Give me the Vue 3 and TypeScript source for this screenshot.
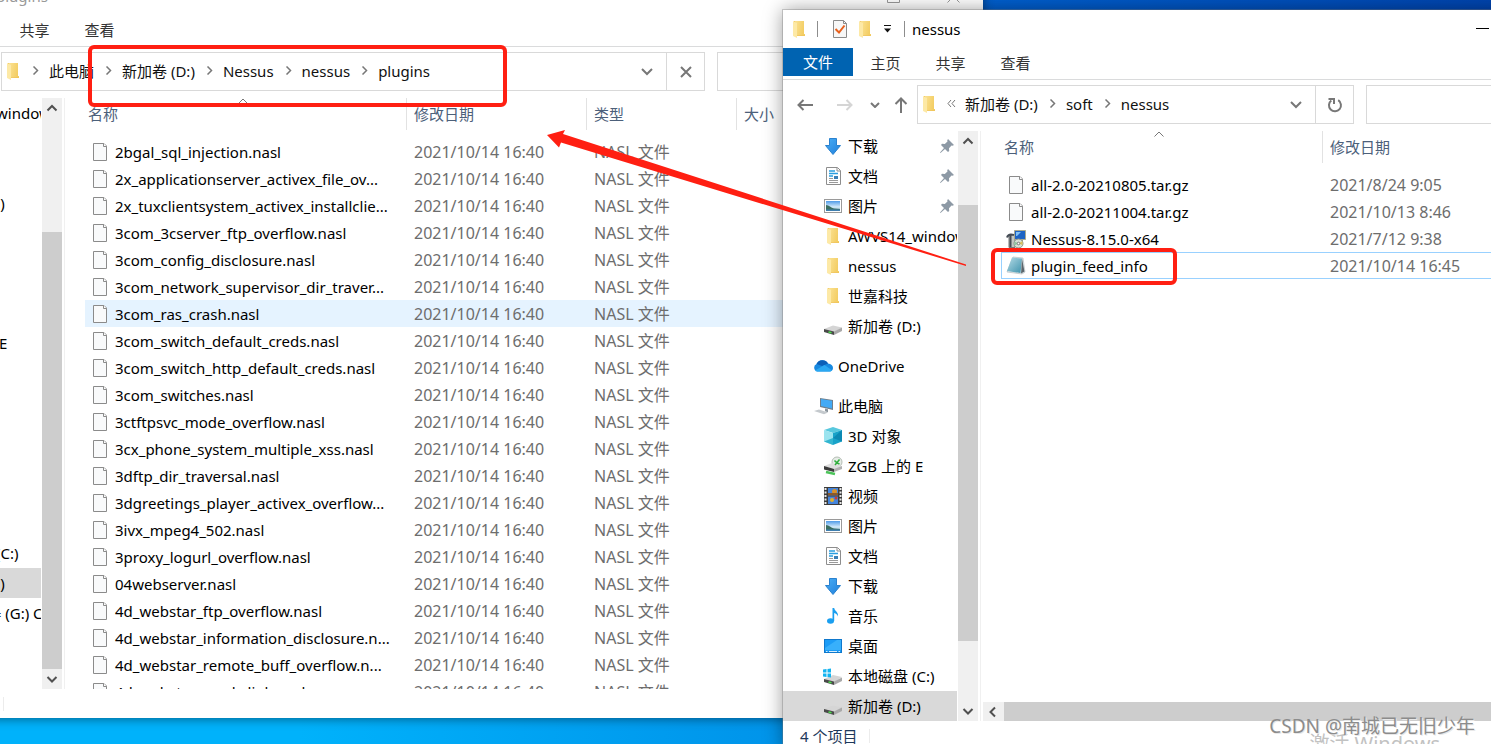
<script setup lang="ts">
interface NavItem {
  label?: string
  icon?: string
  level?: 1 | 2
  pinned?: boolean
  selected?: boolean
  gap?: boolean
}
interface FileRow {
  name: string
  icon: string
  date: string
  type?: string
  state?: 'hover' | 'focused'
}
interface ExplorerWindow {
  id: string
  title: string
  active: boolean
  crumbs: string[]
  collapsed: boolean
  loading: boolean
  thumb: { top: number; size: number }
  nav: NavItem[]
  columns: string[]
  files: FileRow[]
  status: string
  hscroll: boolean
}

const plugins = [
  '2bgal_sql_injection.nasl',
  '2x_applicationserver_activex_file_ov...',
  '2x_tuxclientsystem_activex_installclie...',
  '3com_3cserver_ftp_overflow.nasl',
  '3com_config_disclosure.nasl',
  '3com_network_supervisor_dir_traver...',
  '3com_ras_crash.nasl',
  '3com_switch_default_creds.nasl',
  '3com_switch_http_default_creds.nasl',
  '3com_switches.nasl',
  '3ctftpsvc_mode_overflow.nasl',
  '3cx_phone_system_multiple_xss.nasl',
  '3dftp_dir_traversal.nasl',
  '3dgreetings_player_activex_overflow...',
  '3ivx_mpeg4_502.nasl',
  '3proxy_logurl_overflow.nasl',
  '04webserver.nasl',
  '4d_webstar_ftp_overflow.nasl',
  '4d_webstar_information_disclosure.n...',
  '4d_webstar_remote_buff_overflow.n...',
  '4d_webstar_symb_link.nasl',
]

const windows: ExplorerWindow[] = [
  {
    id: 'rear',
    title: 'plugins',
    active: false,
    crumbs: ['此电脑', '新加卷 (D:)', 'Nessus', 'nessus', 'plugins'],
    collapsed: false,
    loading: true,
    thumb: { top: 20.8, size: 79.2 },
    nav: [
      { label: 'AWVS14_windows', icon: 'folder' },
      {},
      {},
      { label: '新加卷 (D:)', icon: 'drive' },
      { gap: true },
      {},
      { gap: true },
      {},
      {},
      { label: 'ZGB 上的 E', icon: 'netdrive' },
      {},
      {},
      {},
      {},
      {},
      {},
      { label: '本地磁盘 (C:)', icon: 'sysdrive' },
      { label: '新加卷 (D:)', icon: 'drive', selected: true },
      { label: 'CD 驱动器 (G:) CDROM', icon: 'drive' },
    ],
    columns: ['名称', '修改日期', '类型', '大小'],
    files: plugins.map((name, i) => ({
      name,
      icon: 'file',
      date: '2021/10/14 16:40',
      type: 'NASL 文件',
      state: i === 6 ? 'hover' : undefined,
    })),
    status: '',
    hscroll: false,
  },
  {
    id: 'front',
    title: 'nessus',
    active: true,
    crumbs: ['新加卷 (D:)', 'soft', 'nessus'],
    collapsed: true,
    loading: false,
    thumb: { top: 9.8, size: 79.3 },
    nav: [
      { label: '下载', icon: 'download', pinned: true },
      { label: '文档', icon: 'document', pinned: true },
      { label: '图片', icon: 'picture', pinned: true },
      { label: 'AWVS14_windows', icon: 'folder' },
      { label: 'nessus', icon: 'folder' },
      { label: '世嘉科技', icon: 'folder' },
      { label: '新加卷 (D:)', icon: 'drive' },
      { gap: true },
      { label: 'OneDrive', icon: 'cloud', level: 1 },
      { gap: true },
      { label: '此电脑', icon: 'computer', level: 1 },
      { label: '3D 对象', icon: 'cube' },
      { label: 'ZGB 上的 E', icon: 'netdrive' },
      { label: '视频', icon: 'video' },
      { label: '图片', icon: 'picture' },
      { label: '文档', icon: 'document' },
      { label: '下载', icon: 'download' },
      { label: '音乐', icon: 'music' },
      { label: '桌面', icon: 'desktop' },
      { label: '本地磁盘 (C:)', icon: 'sysdrive' },
      { label: '新加卷 (D:)', icon: 'drive', selected: true },
    ],
    columns: ['名称', '修改日期'],
    files: [
      { name: 'all-2.0-20210805.tar.gz', icon: 'file', date: '2021/8/24 9:05' },
      { name: 'all-2.0-20211004.tar.gz', icon: 'file', date: '2021/10/13 8:46' },
      { name: 'Nessus-8.15.0-x64', icon: 'installer', date: '2021/7/12 9:38' },
      { name: 'plugin_feed_info', icon: 'notepad', date: '2021/10/14 16:45', state: 'focused' },
    ],
    status: '4 个项目',
    hscroll: true,
  },
]
</script>

<template>
  <main class="desktop">
    <svg class="sprites" aria-hidden="true">
      <defs>
        <linearGradient id="gFolder" x1="0" x2="1" y1="0" y2="0.3">
          <stop offset="0" stop-color="#fbe293" /><stop offset="1" stop-color="#f3cd63" />
        </linearGradient>
        <linearGradient id="gBlue" x1="0" x2="1" y1="0" y2="1">
          <stop offset="0" stop-color="#4aaef5" /><stop offset="1" stop-color="#1f7fdc" />
        </linearGradient>
        <linearGradient id="gSky" x1="0" x2="0" y1="0" y2="1">
          <stop offset="0" stop-color="#4f9be8" /><stop offset="0.6" stop-color="#d5ebfa" />
          <stop offset="1" stop-color="#6fa0b8" />
        </linearGradient>
        <linearGradient id="gNote" x1="0" x2="1" y1="0" y2="1">
          <stop offset="0" stop-color="#b5dbe6" /><stop offset="1" stop-color="#3f93ad" />
        </linearGradient>
      </defs>
      <symbol id="i-folder" viewBox="0 0 20 20">
        <path d="M5 2h10v13l1 1v1H7z" fill="#eebf55" />
        <path d="M6 2h9v13h1v1.500H8z" fill="url(#gFolder)" />
        <path d="M4 2l4 2v15l-4-2z" fill="#fde9a6" />
      </symbol>
      <symbol id="i-file" viewBox="0 0 20 20">
        <path d="M3.500 1.500h10.500l2.500 2.500v14.500h-13z" fill="#f9fafb" stroke="#8b8b8b" />
        <path d="M13.500 1.500v3h3" fill="#fff" stroke="#8b8b8b" />
      </symbol>
      <symbol id="i-check" viewBox="0 0 20 20">
        <path d="M3.500 1.500h10l3 3v14h-13z" fill="#f7f7f7" stroke="#8b8b8b" />
        <path d="M13.500 1.500v3h3" fill="none" stroke="#8b8b8b" />
        <path d="M5.500 10l3.500 3.500 5.500-7" fill="none" stroke="#e8601c" stroke-width="2" />
      </symbol>
      <symbol id="i-download" viewBox="0 0 20 20">
        <path d="M6.500 2.500h7v7h4L10 18.500 2.500 9.500h4z" fill="url(#gBlue)" stroke="#2a82cf" />
      </symbol>
      <symbol id="i-document" viewBox="0 0 20 20">
        <path d="M3.500 1.500h11l3 3v14h-14z" fill="#fff" stroke="#8d8d8d" />
        <path d="M14 2v3h3" fill="none" stroke="#8d8d8d" />
        <path d="M6 5h6M6 7.500h9M6 10h4" stroke="#2b9ee0" stroke-width="1.500" />
        <path d="M6 12.500h4M6 14.500h9M6 16.500h9" stroke="#9a9a9a" />
        <rect x="11" y="10" width="4" height="3" fill="#3a7fb5" />
      </symbol>
      <symbol id="i-picture" viewBox="0 0 20 20">
        <rect x="1.500" y="3.500" width="17" height="13" fill="#fff" stroke="#9a9a9a" />
        <rect x="3" y="5" width="14" height="10" fill="url(#gSky)" />
        <path d="M3 9c3 0 5 3 8 3.500l6 .5v2H3z" fill="#3b6f62" />
        <path d="M3 13.500h14V15H3z" fill="#3f7fb0" />
      </symbol>
      <symbol id="i-drive" viewBox="0 0 20 20">
        <path d="M1 13l9-3.500 9 2-8 4.500z" fill="#d5d5d5" />
        <path d="M1 13l10 2.500V19L1 16z" fill="#4a4a4a" />
        <path d="M11 15.500l8-4V15l-8 4z" fill="#a9a9a9" />
        <path d="M5.500 16l3 .8" stroke="#4ee04e" stroke-width="1.500" />
      </symbol>
      <symbol id="i-sysdrive" viewBox="0 0 20 20">
        <path d="M1 13l9-4 9 2-8 5z" fill="#d5d5d5" />
        <path d="M1 13l10 2.500V19L1 16z" fill="#4a4a4a" />
        <path d="M11 15.500l8-4V15l-8 4z" fill="#a9a9a9" />
        <path d="M5.500 16l3 .8" stroke="#4ee04e" stroke-width="1.500" />
        <path d="M0 3.500L3.500 3v3.500H0zM4.500 3L8 2.500v4H4.500zM0 7.500h3.500V11L0 10.500zM4.500 7.500H8v4L4.500 11z" fill="#14b4f0" />
      </symbol>
      <symbol id="i-netdrive" viewBox="0 0 20 20">
        <circle cx="14" cy="6" r="5" fill="#e6ece6" stroke="#b5bdb5" />
        <path d="M1 10l8-3 10 3-8 4z" fill="#dedede" />
        <path d="M11.500 4.500l2.500 2.500M16.500 3.500L12 9M14 7l2.500 1" stroke="#2fae3c" stroke-width="1.500" fill="none" />
        <path d="M1 10l10 3v3L1 13.500z" fill="#3b3b3b" />
        <path d="M11 13l8-3v3l-8 3z" fill="#b0b0b0" />
        <path d="M3 16l9 2" stroke="#4cc45a" stroke-width="2.500" />
      </symbol>
      <symbol id="i-cloud" viewBox="0 0 20 20">
        <path d="M4 15.500a4 4 0 0 1-.5-7.500A6.500 6.500 0 0 1 15 7.500c3 .5 5 2 5 4.500 0 2-1.500 3.500-3.500 3.500z" fill="#1789e0" />
        <path d="M3.500 8A6.500 6.500 0 0 1 15 7.500L9 10z" fill="#0b5fb8" />
        <path d="M2 14.500L11.500 9l7.500 5.200c-.7.900-1.500 1.300-2.500 1.300H4c-.8 0-1.500-.4-2-1z" fill="#2aa8f2" />
      </symbol>
      <symbol id="i-computer" viewBox="0 0 20 20">
        <path d="M7 2l13 2v10L7 11z" fill="#6f7f8c" />
        <path d="M8 3l11 1.800v7.800L8 10z" fill="#43aaf5" />
        <path d="M12 12.500l3 .8v3l-3-1z" fill="#8a949c" />
        <path d="M1 15l5-1.500 9 3-4 1.800z" fill="#c4c9cd" />
      </symbol>
      <symbol id="i-cube" viewBox="0 0 20 20">
        <path d="M1 4l9-3 9 3-9 3z" fill="#58c8de" />
        <path d="M1 4l9 3v12l-9-3.500z" fill="#9be4ef" />
        <path d="M1 15.500L10 12v7z" fill="#33b5d0" />
        <path d="M10 7l9-3v11.500L10 19z" fill="#18a3c9" />
        <path d="M10 12l9 3.500V4z" fill="#0c89b3" />
      </symbol>
      <symbol id="i-video" viewBox="0 0 20 20">
        <rect x="1" y="1" width="18" height="18" fill="#3b3b3b" />
        <path d="M2.500 2v16M17.500 2v16" stroke="#e8e8e8" stroke-width="2" stroke-dasharray="2 1.500" />
        <path d="M5 2h10v7.500H5zM5 10.500h10V18H5z" fill="#4585dc" />
        <circle cx="11.500" cy="5.500" r="2.500" fill="#d9912a" />
        <path d="M5 7h10v2.500H5z" fill="#8a5a2c" />
        <circle cx="9" cy="14" r="2" fill="#e2b02f" />
        <circle cx="13" cy="12" r="1.500" fill="#c93a34" />
      </symbol>
      <symbol id="i-music" viewBox="0 0 20 20">
        <ellipse cx="7.500" cy="15" rx="3.500" ry="2.800" fill="#1a9ff0" />
        <path d="M9.500 2h1.700c.3 3 4.300 3.500 3.800 8.500-.6-2-2-3-3.800-3.500V15H9.500z" fill="#1a9ff0" />
      </symbol>
      <symbol id="i-desktop" viewBox="0 0 20 20">
        <rect x="1.500" y="3.500" width="17" height="13" fill="#1c9cf6" stroke="#0f78cc" />
        <path d="M2 12L14 4h4v10H2z" fill="#38b0fb" />
        <path d="M3 15.500h1.500M6 15.500h8M15.500 15.500H17" stroke="#d8effd" />
      </symbol>
      <symbol id="i-installer" viewBox="0 0 20 20">
        <path d="M3 5.500h6v13H3z" fill="#c3c7c2" stroke="#777" />
        <path d="M8.500 1.500h11v9h-11z" fill="#1d63c4" stroke="#a9a98f" />
        <path d="M10 3h5l-4 4h-1z" fill="#7fc0f5" />
        <path d="M10 11h7v2h-7z" fill="#8c8c7c" />
        <circle cx="12.500" cy="14.500" r="4.500" fill="#d6dfd4" stroke="#8a938a" />
        <path d="M12.500 14.500l4-2.500v4z" fill="#d9c05a" />
        <path d="M12.500 14.500l-4 2v-4z" fill="#8fc7a0" />
        <circle cx="12.500" cy="14.500" r="1.300" fill="#fff" stroke="#777" />
        <path d="M1 8.500c1-3 4-3.500 7-2.500M4.500 6v12" fill="none" stroke="#454c55" stroke-width="2" />
      </symbol>
      <symbol id="i-notepad" viewBox="0 0 20 20">
        <path d="M7 1l10 1 2 14-3 2-15-2z" fill="#e9eef0" stroke="#9aa7ad" stroke-width="0.500" />
        <path d="M6 1.500l10 1L14.500 17 1 15z" fill="url(#gNote)" />
        <path d="M16 2.500l2.500 13-3.500 2z" fill="#5b656b" />
      </symbol>
      <symbol id="i-pin" viewBox="0 0 16 16">
        <path d="M9 1l6 6-1.500.8-1-.2-2.500 2.600.2 2.800-1.200 1L6 11l-4.500 4L1 14.500 5 10 2 7l1-1.200 2.800.2L8.500 3.500 8.200 2.500z" fill="#8d99a5" />
      </symbol>
    </svg>

    <section
      v-for="w in windows"
      :key="w.id"
      class="window"
      :class="[w.id, { active: w.active }]"
      :aria-label="w.title"
    >
      <header class="titlebar">
        <svg class="icon"><use href="#i-folder" /></svg>
        <i class="rule"></i>
        <svg class="icon check"><use href="#i-check" /></svg>
        <svg class="icon"><use href="#i-folder" /></svg>
        <svg class="caret" viewBox="0 0 9 8"><path d="M1 .5h7" stroke="#111" /><path d="M1 3.500h7L4.500 7.500z" fill="#111" /></svg>
        <i class="rule last"></i>
        <h1>{{ w.title }}</h1>
        <div class="controls">
          <button aria-label="最小化"><svg viewBox="0 0 13 13"><path d="M0 5.500h13" /></svg></button>
          <button aria-label="最大化"><svg viewBox="0 0 13 13"><path d="M.5.500h12v12H.5z" /></svg></button>
          <button aria-label="关闭"><svg viewBox="0 0 13 13"><path d="M.5.500l12 12M12.500.500l-12 12" /></svg></button>
        </div>
      </header>

      <div class="tabs">
        <button class="file-tab">文件</button>
        <button>主页</button>
        <button>共享</button>
        <button>查看</button>
      </div>

      <div class="toolbar">
        <button class="tool" aria-label="后退"><svg viewBox="0 0 16 12"><path d="M6.500 1L1.500 6l5 5M1.500 6H16" /></svg></button>
        <button class="tool forward" aria-label="前进"><svg viewBox="0 0 16 12"><path d="M9.500 1l5 5-5 5M14.500 6H0" /></svg></button>
        <button class="tool recent" aria-label="最近"><svg viewBox="0 0 10 6"><path d="M1 1l4 4 4-4" /></svg></button>
        <button class="tool up" aria-label="向上"><svg viewBox="0 0 14 16"><path d="M1.500 7L7 1.500 12.500 7M7 1.500V16" /></svg></button>
        <div class="address">
          <svg class="icon"><use href="#i-folder" /></svg>
          <div class="crumbs">
            <template v-for="(c, i) in w.crumbs" :key="i">
              <svg v-if="i === 0 && w.collapsed" class="sep" viewBox="0 0 9 9"><path d="M4 1L1 4.500 4 8M8 1L5 4.500 8 8" /></svg>
              <svg v-else class="sep" viewBox="0 0 9 9"><path d="M2.500.500l4 4-4 4" stroke-width="1.500" /></svg>
              <button>{{ c }}</button>
            </template>
          </div>
          <button class="drop" aria-label="历史"><svg viewBox="0 0 12 8"><path d="M1 1l5 5 5-5" /></svg></button>
          <button class="reload" :aria-label="w.loading ? '停止' : '刷新'">
            <svg v-if="w.loading" viewBox="0 0 16 16"><path d="M3 3l10 10M13 3L3 13" /></svg>
            <svg v-else viewBox="0 0 16 16"><path d="M11.200 3.200a6 6 0 1 1-6.900.3M1.500 2h5.500v5" /></svg>
          </button>
        </div>
        <input class="search" type="search" aria-label="搜索" />
      </div>

      <div class="body">
        <nav class="tree">
          <template v-for="(n, i) in w.nav" :key="i">
            <div v-if="n.gap" class="tree-gap"></div>
            <div v-else-if="!n.label" class="tree-row"></div>
            <a v-else href="#" class="tree-row" :class="{ selected: n.selected, top: n.level === 1 }">
              <svg class="icon"><use :href="'#i-' + n.icon" /></svg>
              <span>{{ n.label }}</span>
              <svg v-if="n.pinned" class="pin"><use href="#i-pin" /></svg>
            </a>
          </template>
        </nav>
        <div class="vscroll">
          <svg viewBox="0 0 20 20"><path d="M5.500 12.500L10 8l4.500 4.500" /></svg>
          <div class="track">
            <div class="thumb" :style="{ marginTop: 'calc(' + w.thumb.top + ' * var(--step))', height: w.thumb.size + '%' }"></div>
          </div>
          <svg viewBox="0 0 20 20"><path d="M5.500 8l4.500 4.500L14.500 8" /></svg>
        </div>
        <div class="content">
          <div class="listing">
            <table>
              <colgroup>
                <col v-for="(c, i) in w.columns" :key="c" :class="'col' + i" />
                <col v-if="w.columns.length < 4" />
              </colgroup>
              <thead>
                <tr>
                  <th v-for="(c, i) in w.columns" :key="c" scope="col">
                    <span>{{ c }}</span>
                    <svg v-if="i === 0" class="sort" viewBox="0 0 10 6"><path d="M.5 5.500L5 1l4.500 4.500" /></svg>
                  </th>
                </tr>
              </thead>
              <tbody>
                <tr v-for="f in w.files" :key="f.name" :class="f.state">
                  <td class="name">
                    <div><svg class="icon"><use :href="'#i-' + f.icon" /></svg><span>{{ f.name }}</span></div>
                  </td>
                  <td>{{ f.date }}</td>
                  <td>{{ f.type }}</td>
                  <td v-if="w.columns.length === 4"></td>
                </tr>
              </tbody>
            </table>
          </div>
          <div v-if="w.hscroll" class="hscroll">
            <svg viewBox="0 0 20 20"><path d="M12 5.500L7.500 10l4.500 4.500" /></svg>
            <div class="thumb"></div>
          </div>
        </div>
      </div>

      <footer class="status"><span>{{ w.status }}</span></footer>
    </section>

    <svg class="marks" aria-hidden="true">
      <g fill="none" stroke="#ff1f12" stroke-width="4">
        <rect x="90" y="47" width="415" height="58" rx="4" />
        <rect x="993" y="250" width="182" height="33" rx="4" />
      </g>
      <path d="M547 135L565 130L563 134L966 264.500V266L561 142.500L559 147.500z" fill="#ff1f12" />
    </svg>

    <p class="activate">激活 Windows</p>
    <p class="watermark">CSDN @南城已无旧少年</p>
  </main>
</template>

<style>
body {
  margin: 0;
}
</style>

<style scoped>
.desktop {
  position: relative;
  height: 100vh;
  overflow: hidden;
  background:
    linear-gradient(90deg, #00b2fb 20%, #0094ea 52%, #0078d7) bottom / 100% 60px no-repeat,
    linear-gradient(90deg, #0078d7 50%, #0060d0 66%, #0045b0);
  font: 15px/22px "Noto Sans", "Noto Sans CJK SC", sans-serif;
  color: #000;
}
.sprites {
  position: absolute;
  width: 0;
  height: 0;
}
button {
  padding: 0;
  border: 0;
  background: none;
  font: inherit;
  color: inherit;
  white-space: nowrap;
}
a {
  color: inherit;
  text-decoration: none;
}
svg {
  display: block;
  flex: none;
}
.icon {
  width: 20px;
  height: 20px;
}

.window {
  position: absolute;
  display: flex;
  flex-direction: column;
  box-sizing: border-box;
  background: #fff;
}
.rear {
  left: -133px;
  right: 508px;
  top: -23px;
  bottom: 26px;
  box-shadow: 0 1px 10px rgba(0, 0, 0, 0.45);
}
.front {
  left: 783px;
  right: -141px;
  top: 10px;
  bottom: -6px;
  box-shadow: 0 0 0 1px rgba(120, 120, 120, 0.35), 0 0 18px rgba(0, 0, 0, 0.4);
}

.titlebar {
  display: flex;
  align-items: center;
  height: 38px;
  padding-left: 6px;
}
.titlebar h1 {
  margin: 0;
  flex: 1;
  font: inherit;
  color: #999;
}
.active .titlebar h1 {
  color: #000;
}
.rule {
  width: 1px;
  height: 16px;
  margin: 0 12px 0 8px;
  background: #8d8d8d;
}
.rule.last {
  margin: 0 7px 0 12px;
}
.check {
  margin-right: 5px;
}
.caret {
  width: 9px;
  height: 8px;
  margin-left: 8px;
}
.controls {
  display: flex;
}
.controls button {
  display: grid;
  place-items: center;
  width: 60px;
  height: 38px;
}
.controls svg {
  width: 13px;
  height: 13px;
  fill: none;
  stroke: #000;
}
.rear .controls svg {
  stroke: #999;
}

.tabs {
  display: flex;
  align-items: flex-start;
  height: 31px;
  border-bottom: 1px solid #dadbdc;
  color: #333;
}
.tabs button {
  width: 65px;
  height: 30px;
}
.tabs .file-tab {
  width: 70px;
  height: 28px;
  background: #0063b1;
  color: #fff;
}

.toolbar {
  display: flex;
  align-items: center;
  height: 39px;
  padding: 5px 8px 7px 14px;
}
.tool svg {
  width: 16px;
  height: 12px;
  margin-right: 24px;
  fill: none;
  stroke: #777;
  stroke-width: 2;
}
.tool.forward svg {
  stroke: #d5d5d5;
  margin-right: 17px;
}
.tool.recent svg {
  width: 10px;
  height: 6px;
  margin-right: 14px;
}
.tool.up svg {
  width: 14px;
  height: 16px;
  margin-right: 9px;
}
.address {
  display: flex;
  align-items: stretch;
  flex: 1;
  box-sizing: border-box;
  height: 39px;
  margin-right: 12px;
  border: 1px solid #d9d9d9;
}
.address .icon {
  margin: 8px 0 0 1px;
}
.crumbs {
  display: flex;
  align-items: center;
  flex: 1;
  padding-bottom: 2px;
  color: #111;
}
.sep {
  width: 9px;
  height: 9px;
  margin: 0 9px 0 10px;
  fill: none;
  stroke: #777;
}
.crumbs .sep:first-child {
  margin-left: 8px;
}
.drop,
.reload {
  display: grid;
  place-items: center;
  width: 38px;
}
.drop svg {
  width: 12px;
  height: 8px;
  fill: none;
  stroke: #777;
  stroke-width: 2;
}
.reload {
  border-left: 1px solid #d9d9d9;
}
.reload svg {
  width: 16px;
  height: 16px;
  fill: none;
  stroke: #777;
  stroke-width: 2;
}
.search {
  box-sizing: border-box;
  width: 258px;
  height: 39px;
  padding: 0 8px;
  border: 1px solid #d9d9d9;
  border-radius: 0;
  background: #fff;
  font: inherit;
  appearance: none;
}

.body {
  display: flex;
  flex: 1;
  min-height: 0;
}
.tree {
  width: 174px;
  margin-right: 1px;
  overflow: hidden;
}
.tree-row {
  display: flex;
  align-items: center;
  gap: 5px;
  height: 30px;
  padding-left: 40px;
  white-space: nowrap;
}
.tree-row span {
  flex: 1;
}
.tree-row.top {
  padding-left: 30px;
}
.tree-row.selected {
  background: #d9d9d9;
}
.tree-gap {
  height: 10px;
}
.pin {
  width: 16px;
  height: 16px;
  margin-right: 2px;
}
.vscroll {
  display: flex;
  flex-direction: column;
  width: 20px;
  margin-right: 2px;
  background: #f0f0f0;
}
.vscroll svg,
.hscroll svg {
  width: 20px;
  height: 20px;
  fill: none;
  stroke: #505050;
  stroke-width: 2;
}
.track {
  --step: 5.5px;
  flex: 1;
  min-height: 0;
  overflow: hidden;
}
.thumb {
  background: #cdcdcd;
}
.content {
  display: flex;
  flex-direction: column;
  flex: 1;
  min-width: 0;
  border-left: 1px solid #f0f0f0;
}
.listing {
  flex: 1;
  min-height: 0;
  padding-left: 20px;
  overflow: hidden;
}
table {
  width: 100%;
  table-layout: fixed;
  border-collapse: collapse;
}
.col0 {
  width: 322px;
}
.col1 {
  width: 180px;
}
.col2 {
  width: 150px;
}
th {
  position: relative;
  height: 40px;
  padding: 0;
  vertical-align: top;
  text-align: left;
  font-weight: 400;
  color: #4c607a;
}
th span {
  display: block;
  box-sizing: border-box;
  height: 32px;
  padding-left: 7px;
  border-right: 1px solid #e2e2e2;
  line-height: 32px;
}
th:first-child span {
  padding-left: 3px;
}
.sort {
  position: absolute;
  top: 0;
  left: 50%;
  width: 10px;
  height: 6px;
  margin-left: -8px;
  fill: none;
  stroke: #777;
}
td {
  height: 27px;
  padding: 0 0 0 7px;
  font-size: 16px;
  color: #6d6d6d;
  white-space: nowrap;
}
td.name {
  padding: 0 0 0 5px;
  font-size: 15px;
  color: #000;
}
td.name div {
  display: flex;
  align-items: center;
  gap: 5px;
  height: 27px;
}
.hover {
  background: #e5f3ff;
}
.focused td {
  box-shadow: inset 0 1px #99d1ff, inset 0 -1px #99d1ff;
}
.focused td.name {
  box-shadow: inset 0 1px #99d1ff, inset 0 -1px #99d1ff, inset 1px 0 #99d1ff;
}
.hscroll {
  display: flex;
  height: 19px;
  margin-left: 2px;
  background: #f0f0f0;
}
.hscroll .thumb {
  flex: 1;
  margin-left: 1px;
}
.status {
  display: flex;
  align-items: center;
  height: 29px;
  padding-left: 17px;
  color: #1e395b;
}
.status span {
  padding-right: 12px;
  border-right: 1px solid #ececec;
  line-height: 14px;
}
.rear .status span {
  width: 107px;
  height: 14px;
}

.marks {
  position: absolute;
  left: 0;
  top: 0;
  width: 100%;
  height: 100%;
  pointer-events: none;
}
.watermark,
.activate {
  position: absolute;
  margin: 0;
  white-space: nowrap;
}
.watermark {
  right: 16px;
  bottom: 4px;
  font-size: 19px;
  line-height: 28px;
  color: #8c8c8c;
  text-shadow: 1px 1px 0 #e8e8e8;
}
.activate {
  right: 51px;
  bottom: -14px;
  font-size: 20px;
  line-height: 28px;
  color: #c2c2c2;
}
</style>
